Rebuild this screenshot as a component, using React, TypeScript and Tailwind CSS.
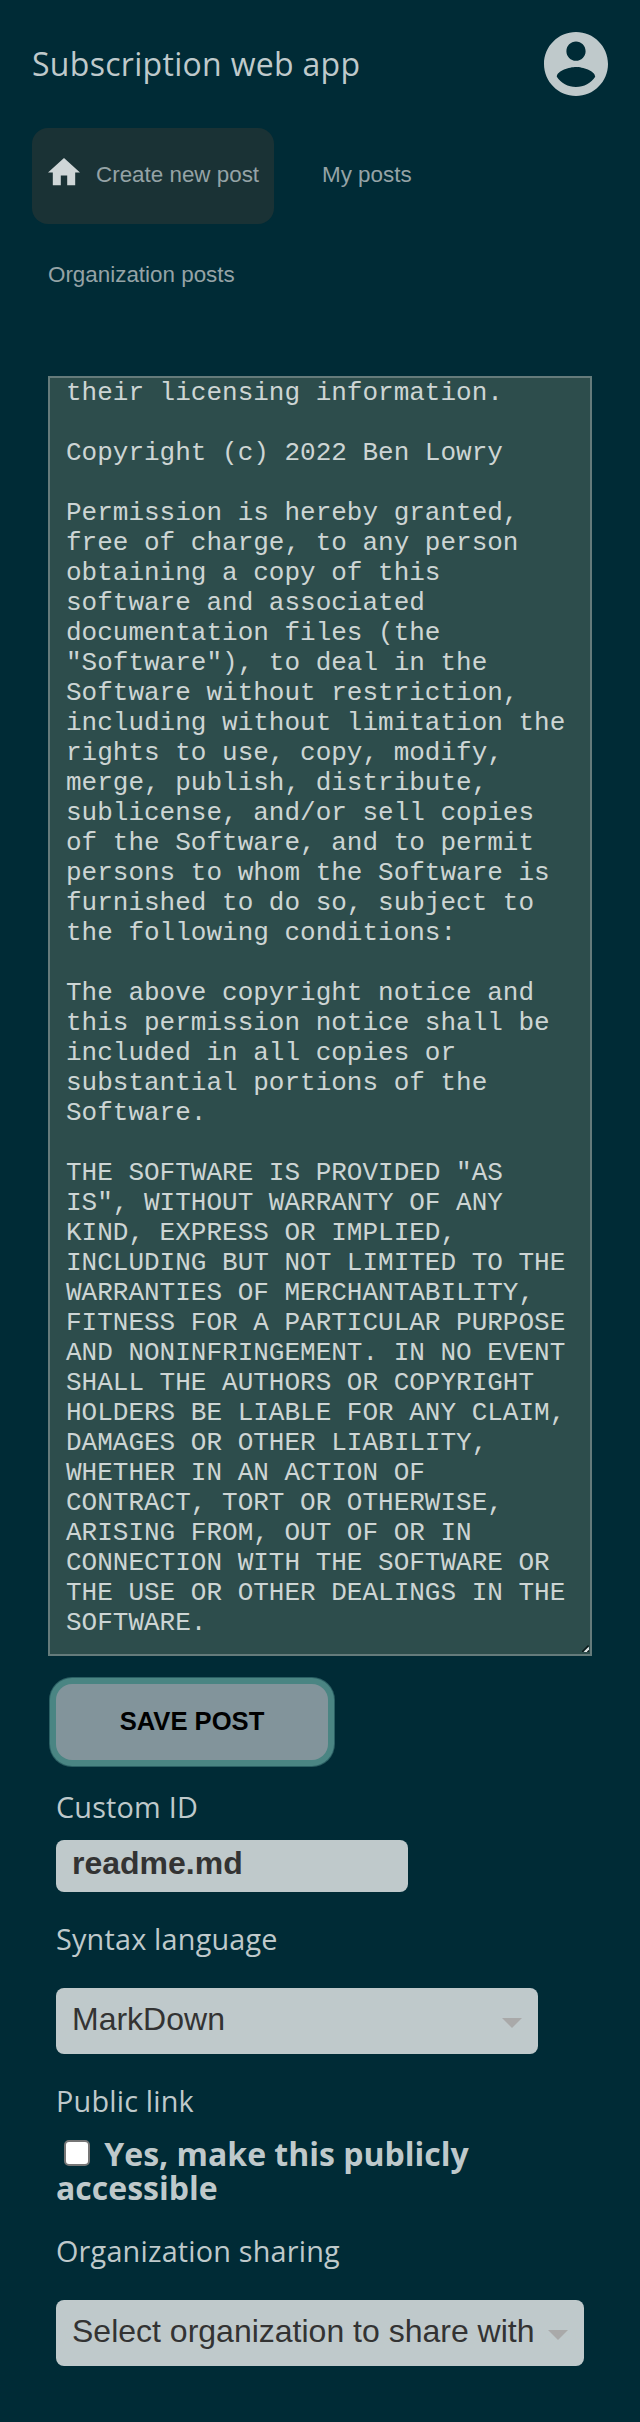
import { ReactNode } from "react";

const license = `their licensing information.

Copyright (c) 2022 Ben Lowry

Permission is hereby granted, free of charge, to any person obtaining a copy of this software and associated documentation files (the "Software"), to deal in the Software without restriction, including without limitation the rights to use, copy, modify, merge, publish, distribute, sublicense, and/or sell copies of the Software, and to permit persons to whom the Software is furnished to do so, subject to the following conditions:

The above copyright notice and this permission notice shall be included in all copies or substantial portions of the Software.

THE SOFTWARE IS PROVIDED "AS IS", WITHOUT WARRANTY OF ANY KIND, EXPRESS OR IMPLIED, INCLUDING BUT NOT LIMITED TO THE WARRANTIES OF MERCHANTABILITY, FITNESS FOR A PARTICULAR PURPOSE AND NONINFRINGEMENT. IN NO EVENT SHALL THE AUTHORS OR COPYRIGHT HOLDERS BE LIABLE FOR ANY CLAIM, DAMAGES OR OTHER LIABILITY, WHETHER IN AN ACTION OF CONTRACT, TORT OR OTHERWISE, ARISING FROM, OUT OF OR IN CONNECTION WITH THE SOFTWARE OR THE USE OR OTHER DEALINGS IN THE SOFTWARE.`;

function Label({ children, className }: { children: ReactNode; className: string }) {
  return (
    <div className={`text-[28.8px] leading-[40px] font-[380] tracking-[0.2px] whitespace-nowrap ${className}`}>
      {children}
    </div>
  );
}

function SelectBox({ children, className }: { children: ReactNode; className: string }) {
  return (
    <button
      type="button"
      className={`flex h-[66px] items-center justify-between rounded-lg bg-[#bfc9cb] px-4 font-['Liberation_Sans',Arial,sans-serif] text-[32px] leading-[36px] whitespace-nowrap text-[#333] ${className}`}
    >
      <span className="-mt-1">{children}</span>
      <svg className="mt-1 h-[10px] w-5 shrink-0" viewBox="0 0 20 10">
        <path d="M0 0h20L10 10z" fill="#a9a9a9" />
      </svg>
    </button>
  );
}

export default function App() {
  return (
    <div className="flex h-[2422px] w-[640px] flex-col bg-[#002b36] font-['Open_Sans','Noto_Sans',sans-serif] text-[#bfc9cb]">
      <header className="flex h-32 items-center justify-between px-8">
        <h1 className="text-[32px] leading-[44px] tracking-[0.3px]">Subscription web app</h1>
        <svg className="size-16" viewBox="2 2 20 20" fill="currentColor">
          <path d="M12 2C6.48 2 2 6.48 2 12s4.48 10 10 10 10-4.48 10-10S17.52 2 12 2zm0 3c1.66 0 3 1.34 3 3s-1.34 3-3 3-3-1.34-3-3 1.34-3 3-3zm0 14.2c-2.5 0-4.71-1.28-6-3.22.03-1.99 4-3.08 6-3.08 1.99 0 5.97 1.09 6 3.08-1.29 1.94-3.5 3.22-6 3.22z" />
        </svg>
      </header>

      <nav className="h-[248px] px-8 font-['Liberation_Sans',Arial,sans-serif] text-[22.4px] leading-[26px] whitespace-nowrap text-[#95a3a6]">
        <div className="flex gap-8">
          <a className="flex h-24 w-[242px] items-center rounded-2xl bg-[#1a3235] pb-[2px] pl-4">
            <svg className="-mt-[6px] mr-4 h-[27.2px] w-8 shrink-0" viewBox="2 3 20 17" fill="#cfd6d7">
              <path d="M10 20v-6h4v6h5v-8h3L12 3 2 12h3v8z" />
            </svg>
            <span>Create new post</span>
          </a>
          <a className="flex h-24 items-center px-4 pb-[2px]">My posts</a>
        </div>
        <a className="mt-1 flex h-24 items-center px-4 pb-[2px]">Organization posts</a>
      </nav>

      <main className="flex flex-col items-start">
        <div className="relative ml-12">
          <textarea
            className="block h-[1280px] w-[544px] resize-none overflow-hidden border-2 border-[#657b7b] bg-[#2d4d4c] px-4 pt-0 pb-4 font-['Liberation_Mono',monospace] text-[26px] leading-[30px] text-[#cdd5d4]"
            defaultValue={license}
            spellCheck={false}
          />
          <svg className="absolute right-[3px] bottom-1 h-[7px] w-[7px]" viewBox="0 0 7 7">
            <path d="M2.5 7L7 2.5M4 7L7 4" stroke="#dfe5e5" strokeWidth="1.6" />
            <path d="M0 7L6.5 0.5M5.5 7L7 5.5" stroke="#0d1a1b" strokeWidth="1.4" />
          </svg>
        </div>
        <button className="mt-7 ml-14 h-[76px] w-[272px] rounded-2xl bg-[#82949b] pb-[2px] font-['Liberation_Sans',Arial,sans-serif] text-[25.6px] leading-[30px] font-bold text-black shadow-[0_0_0_6px_#4a8583,0_0_0_7px_#2a5f63]">
          SAVE POST
        </button>
        <form className="flex flex-col items-start pl-14">
          <Label className="mt-[27px]">Custom ID</Label>
          <input
            className="mt-[13px] h-[52px] w-[352px] rounded-lg bg-[#bfc9cb] px-4 pb-[6px] font-['Liberation_Sans',Arial,sans-serif] text-[32px] leading-[36px] font-bold text-[#333]"
            defaultValue="readme.md"
            spellCheck={false}
          />
          <Label className="mt-[27px]">Syntax language</Label>
          <SelectBox className="mt-[29px] w-[482px]">MarkDown</SelectBox>
          <Label className="mt-[27px]">Public link</Label>
          <label className="mt-4 h-[68px] w-[480px] text-[32px] leading-[34px] font-bold">
            <input
              type="checkbox"
              className="mr-[6px] ml-2 size-[26px] appearance-none rounded-[5px] border-2 border-[#767676] bg-white align-baseline"
            />{" "}
            Yes, make this publicly accessible
          </label>
          <Label className="mt-[26px]">Organization sharing</Label>
          <SelectBox className="mt-[29px] w-[528px]">Select organization to share with</SelectBox>
        </form>
      </main>
    </div>
  );
}
